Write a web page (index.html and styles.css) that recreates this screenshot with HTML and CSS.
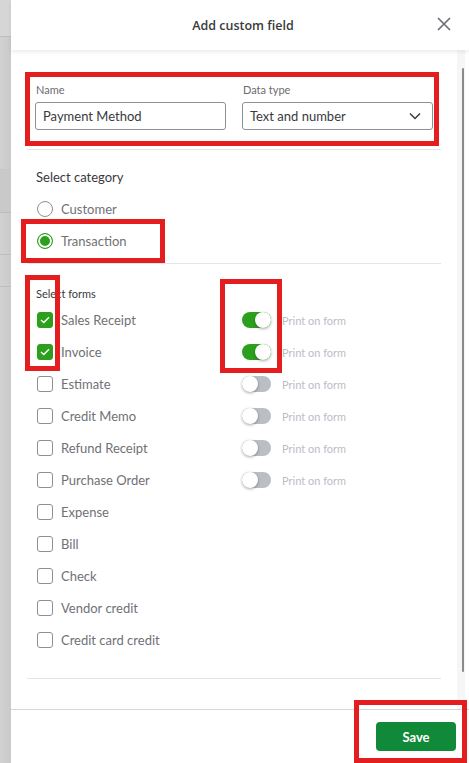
FILE: index.html
```html
<!DOCTYPE html>
<html>
<head>
<meta charset="utf-8">
<link rel="stylesheet" href="styles.css">
</head>
<body>
<div class="page">
  <div class="backdrop">
    <div class="bd-top"></div>
    <div class="bd-mid"></div>
    <div class="bd-band"></div>
    <div class="bd-row"></div>
    <div class="bd-row"></div>
    <div class="bd-rest"></div>
  </div>
  <div class="panel">
    <header class="header">
      <h1 class="title">Add custom field</h1>
      <button class="close" aria-label="Close">
        <svg width="14" height="14" viewBox="0 0 14 14"><path d="M1 1 L13 13 M13 1 L1 13" stroke="#6b6c72" stroke-width="1.6" fill="none"/></svg>
      </button>
    </header>
    <div class="body">
      <div class="content">
        <section class="section fields">
          <div class="field">
            <label class="field-label">Name</label>
            <div class="input">Payment Method</div>
          </div>
          <div class="field">
            <label class="field-label">Data type</label>
            <div class="input select">
              <span>Text and number</span>
              <svg width="12" height="8" viewBox="0 0 12 8"><path d="M1 1.5 L6 6.5 L11 1.5" stroke="#393a3d" stroke-width="1.5" fill="none"/></svg>
            </div>
          </div>
        </section>
        <section class="section category">
          <div class="heading">Select category</div>
          <div class="radio-row"><span class="radio"></span><span class="opt">Customer</span></div>
          <div class="radio-row"><span class="radio on"></span><span class="opt">Transaction</span></div>
        </section>
        <section class="section forms">
          <div class="heading small">Select forms</div>
          <div class="form-row">
            <div class="cell"><span class="check on"><svg width="10" height="8" viewBox="0 0 10 8"><path d="M1 4 L3.8 6.6 L9 1.2" stroke="#fff" stroke-width="1.4" fill="none"/></svg></span><span class="opt">Sales Receipt</span></div>
            <div class="cell"><span class="toggle on"><span class="knob"></span></span><span class="print">Print on form</span></div>
          </div>
          <div class="form-row">
            <div class="cell"><span class="check on"><svg width="10" height="8" viewBox="0 0 10 8"><path d="M1 4 L3.8 6.6 L9 1.2" stroke="#fff" stroke-width="1.4" fill="none"/></svg></span><span class="opt">Invoice</span></div>
            <div class="cell"><span class="toggle on"><span class="knob"></span></span><span class="print">Print on form</span></div>
          </div>
          <div class="form-row">
            <div class="cell"><span class="check"></span><span class="opt">Estimate</span></div>
            <div class="cell"><span class="toggle"><span class="knob"></span></span><span class="print">Print on form</span></div>
          </div>
          <div class="form-row">
            <div class="cell"><span class="check"></span><span class="opt">Credit Memo</span></div>
            <div class="cell"><span class="toggle"><span class="knob"></span></span><span class="print">Print on form</span></div>
          </div>
          <div class="form-row">
            <div class="cell"><span class="check"></span><span class="opt">Refund Receipt</span></div>
            <div class="cell"><span class="toggle"><span class="knob"></span></span><span class="print">Print on form</span></div>
          </div>
          <div class="form-row">
            <div class="cell"><span class="check"></span><span class="opt">Purchase Order</span></div>
            <div class="cell"><span class="toggle"><span class="knob"></span></span><span class="print">Print on form</span></div>
          </div>
          <div class="form-row"><div class="cell"><span class="check"></span><span class="opt">Expense</span></div></div>
          <div class="form-row"><div class="cell"><span class="check"></span><span class="opt">Bill</span></div></div>
          <div class="form-row"><div class="cell"><span class="check"></span><span class="opt">Check</span></div></div>
          <div class="form-row"><div class="cell"><span class="check"></span><span class="opt">Vendor credit</span></div></div>
          <div class="form-row"><div class="cell"><span class="check"></span><span class="opt">Credit card credit</span></div></div>
        </section>
        <div class="section end"></div>
      </div>
      <div class="scrollbar"><div class="thumb"></div></div>
    </div>
    <footer class="footer">
      <button class="save">Save</button>
    </footer>
  </div>
  <div class="mark m1"></div>
  <div class="mark m2"></div>
  <div class="mark m3"></div>
  <div class="mark m4"></div>
  <div class="mark m5"></div>
</div>
</body>
</html>
```
FILE: styles.css
```css
* { box-sizing: border-box; }
html, body { margin: 0; padding: 0; }
body {
  font-family: Lato, "Open Sans", "Liberation Sans", sans-serif;
  color: #393a3d;
  background: #fff;
}
.page {
  position: relative;
  width: 469px;
  height: 763px;
  display: flex;
  overflow: hidden;
}
.backdrop {
  width: 11px;
  display: flex;
  flex-direction: column;
  background: linear-gradient(90deg, #d2d2d2, #cacaca);
}
.bd-top { height: 37px; background: #d6d6d6; border-bottom: 1px solid #bdbdbd; }
.bd-mid { height: 133px; border-bottom: 1px solid #c4c4c4; }
.bd-band { height: 43px; background: #c9c9c9; border-bottom: 1px solid #bdbdbd; }
.bd-row { height: 42px; border-bottom: 1px solid #bdbdbd; }
.bd-row + .bd-row { height: 32px; }
.bd-rest { flex: 1; }

.panel {
  flex: 1;
  display: flex;
  flex-direction: column;
  background: #fff;
}
.header {
  height: 50px;
  flex: none;
  display: flex;
  align-items: center;
  justify-content: center;
  position: relative;
  box-shadow: 0 2px 4px rgba(0,0,0,0.08);
  z-index: 1;
}
.title {
  margin: 0;
  font-family: "Open Sans", Lato, sans-serif;
  font-size: 12.5px;
  font-weight: 600;
  color: #393a3d;
  padding-left: 6px;
  padding-bottom: 0;
}
.close {
  position: absolute;
  right: 18px;
  top: 17px;
  border: 0;
  background: none;
  padding: 0;
  width: 14px;
  height: 14px;
  display: flex;
}

.body {
  flex: 1;
  display: flex;
  min-height: 0;
}
.content {
  flex: 1;
  padding: 0 16px;
}
.section {
  border-bottom: 1px solid #e3e5e8;
  padding: 0 8px;
}
.fields {
  display: grid;
  grid-template-columns: 1fr 1fr;
  column-gap: 16px;
  padding-top: 33px;
  padding-bottom: 19px;
}
.field { display: flex; flex-direction: column; }
.field-label {
  font-size: 11px;
  line-height: 14px;
  color: #6b6c72;
  margin-bottom: 5px;
  padding-left: 1px;
}
.input {
  height: 28px;
  border: 1px solid #8d9096;
  border-radius: 3px;
  font-size: 13px;
  line-height: 26px;
  padding: 0 7px;
  color: #393a3d;
}
.select {
  display: flex;
  align-items: center;
  justify-content: space-between;
  padding-right: 11px;
}
.category {
  padding-top: 18px;
  padding-bottom: 6px;
}
.heading {
  font-size: 13px;
  line-height: 18px;
  color: #393a3d;
  padding-left: 1px;
  margin-bottom: 7px;
}
.heading.small {
  font-size: 11px;
  line-height: 14px;
  margin-bottom: 3px;
}
.radio-row {
  height: 32px;
  display: flex;
  align-items: center;
}
.radio {
  width: 16px;
  height: 16px;
  border-radius: 50%;
  border: 1px solid #8d9096;
  margin: 0 8px 0 2px;
  flex: none;
  background: #fff;
}
.radio.on {
  border-color: #2ca01c;
  box-shadow: inset 0 0 0 2px #fff;
  background: #2ca01c;
}
.opt {
  font-size: 13px;
  color: #707176;
}
.forms {
  padding-top: 23px;
  padding-bottom: 22px;
}
.form-row {
  height: 32px;
  display: grid;
  grid-template-columns: 1fr 1fr;
  column-gap: 16px;
}
.cell {
  display: flex;
  align-items: center;
}
.check {
  width: 16px;
  height: 16px;
  border: 1px solid #8d9096;
  border-radius: 3px;
  margin: 0 8px 0 2px;
  flex: none;
  display: flex;
  align-items: center;
  justify-content: center;
}
.check.on {
  background: #2ca01c;
  border-color: #2ca01c;
}
.toggle {
  width: 29px;
  height: 16px;
  border-radius: 8px;
  background: #babec5;
  position: relative;
  flex: none;
  margin-right: 11px;
}
.toggle .knob {
  position: absolute;
  top: 0;
  left: 0;
  width: 16px;
  height: 16px;
  border-radius: 50%;
  background: #fff;
  box-shadow: 0 1px 3px rgba(0,0,0,0.35);
}
.toggle.on { background: #2ca01c; }
.toggle.on .knob { left: 13px; }
.print {
  font-size: 11px;
  color: #babec5;
}
.end { height: 31px; border-bottom: 0; }

.scrollbar {
  width: 12px;
  flex: none;
  padding: 18px 0 37px 4px;
  background: linear-gradient(90deg, #fff 0, #f6f6f6 0, #f6f6f6 8px, #fff 8px);
}
.scrollbar .thumb {
  width: 2px;
  height: 100%;
  margin-left: 1px;
  background: #8a8a8a;
  border-radius: 1px;
}

.footer {
  height: 54px;
  flex: none;
  border-top: 1px solid #d4d7dc;
  display: flex;
  justify-content: flex-end;
  align-items: flex-start;
  padding: 12px 13px 0 0;
}
.save {
  width: 80px;
  height: 29px;
  border: 0;
  border-radius: 4px;
  background: #108a38;
  color: #fff;
  font-family: inherit;
  font-size: 13px;
  font-weight: 700;
}

.mark {
  position: absolute;
  border: 5px solid #e41e1e;
  pointer-events: none;
}
.m1 { left: 25px; top: 72px; width: 414px; height: 74px; }
.m2 { left: 21px; top: 219px; width: 144px; height: 44px; }
.m3 { left: 25px; top: 275px; width: 35px; height: 96px; }
.m4 { left: 220px; top: 279px; width: 62px; height: 94px; }
.m5 { left: 354px; top: 700px; width: 113px; height: 63px; }
```
